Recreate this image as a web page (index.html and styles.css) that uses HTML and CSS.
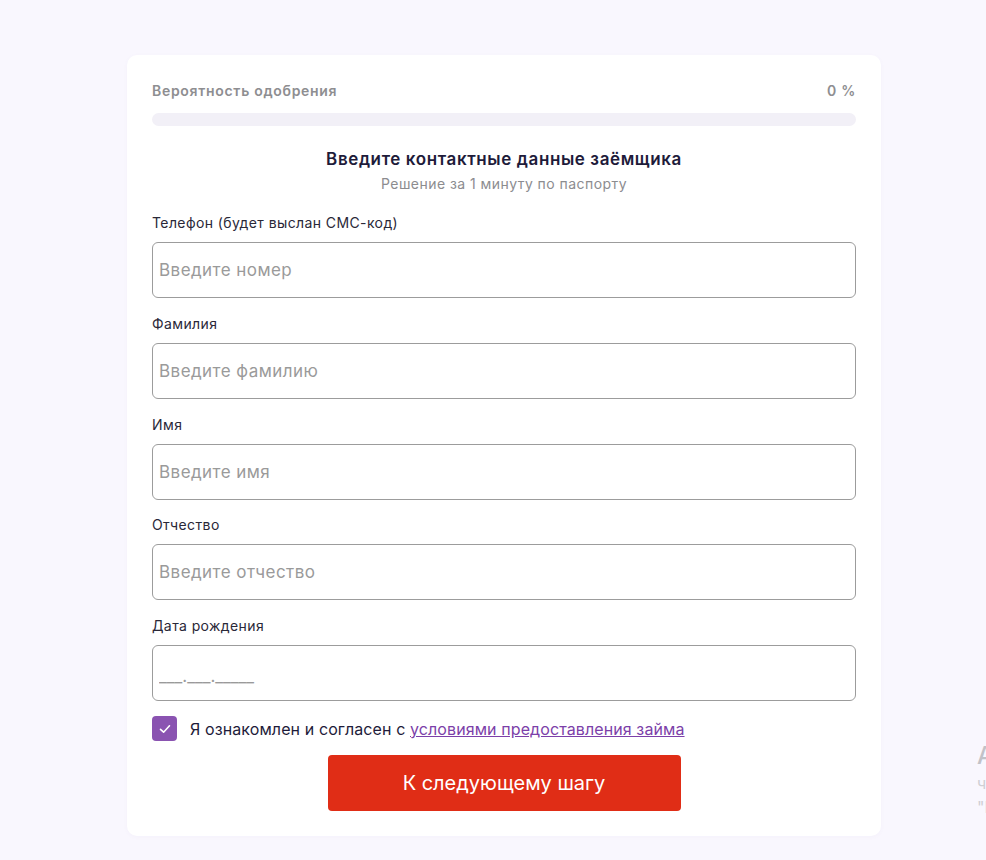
FILE: index.html
```html
<!DOCTYPE html>
<html lang="ru">
<head>
<meta charset="utf-8">
<link rel="stylesheet" href="styles.css">
</head>
<body>
<div class="page">
  <div class="card">
    <div class="progress-head">
      <span>Вероятность одобрения</span>
      <span>0 %</span>
    </div>
    <div class="progress-bar"></div>
    <h1 class="title">Введите контактные данные заёмщика</h1>
    <p class="subtitle">Решение за 1 минуту по паспорту</p>
    <div class="fields">
      <label class="field">
        <span class="label">Телефон (будет выслан СМС-код)</span>
        <input class="input" type="text" placeholder="Введите номер">
      </label>
      <label class="field">
        <span class="label">Фамилия</span>
        <input class="input" type="text" placeholder="Введите фамилию">
      </label>
      <label class="field">
        <span class="label">Имя</span>
        <input class="input" type="text" placeholder="Введите имя">
      </label>
      <label class="field">
        <span class="label">Отчество</span>
        <input class="input" type="text" placeholder="Введите отчество">
      </label>
      <label class="field">
        <span class="label">Дата рождения</span>
        <input class="input input-date" type="text" placeholder="___.___._____">
      </label>
    </div>
    <div class="agree">
      <span class="checkbox">
        <svg width="14" height="14" viewBox="0 0 14 14"><path d="M2.5 7.3 L5.6 10.2 L11.5 3.8" fill="none" stroke="#fff" stroke-width="1.6" stroke-linecap="round" stroke-linejoin="round"/></svg>
      </span>
      <span class="agree-text">Я ознакомлен и согласен с <a href="#" class="link">условиями предоставления займа</a></span>
    </div>
    <div class="actions">
      <button class="btn">К следующему шагу</button>
    </div>
  </div>
  <div class="side">
    <div class="side-title">Автоматическое решение</div>
    <div class="side-text">что нужно для получения</div>
    <div class="side-text">"Прозрачные условия"</div>
  </div>
</div>
</body>
</html>
```
FILE: styles.css
```css
html, body {
  margin: 0;
  padding: 0;
}
body {
  background: #f9f7fe;
  font-family: Inter, Roboto, "Liberation Sans", sans-serif;
  overflow: hidden;
  width: 986px;
  height: 860px;
}
.page {
  display: flex;
  align-items: flex-start;
  padding: 55px 0 0 127px;
  gap: 96px;
  width: max-content;
}
.card {
  width: 754px;
  box-sizing: border-box;
  background: #fff;
  border-radius: 10px;
  padding: 25px 25px 25px;
  box-shadow: 0 1px 4px rgba(120, 100, 170, 0.04);
  flex-shrink: 0;
}
.progress-head {
  display: flex;
  justify-content: space-between;
  font-size: 14px;
  font-weight: 600;
  letter-spacing: 0.7px;
  color: #8e8e91;
  line-height: 22px;
}
.progress-bar {
  margin-top: 11px;
  height: 13px;
  border-radius: 7px;
  background: #f2f0f7;
}
.title {
  margin: 22px 0 0;
  text-align: center;
  font-size: 17px;
  font-weight: 600;
  letter-spacing: 0.6px;
  color: #1e1b3a;
  line-height: 22px;
}
.subtitle {
  margin: 4px 0 0;
  text-align: center;
  font-size: 14px;
  letter-spacing: 0.45px;
  color: #8c8c8f;
  line-height: 20px;
}
.fields {
  margin-top: 19px;
  display: flex;
  flex-direction: column;
  gap: 15.75px;
}
.field {
  display: flex;
  flex-direction: column;
  gap: 9px;
}
.label {
  font-size: 14px;
  line-height: 20px;
  letter-spacing: 0.4px;
  color: #2a2838;
}
.input {
  height: 56px;
  box-sizing: border-box;
  border: 1px solid #9c9c9c;
  border-radius: 6px;
  padding: 0 6px;
  font-family: inherit;
  font-size: 17px;
  letter-spacing: 0.45px;
  color: #333;
  background: #fff;
  outline: none;
}
.input::placeholder {
  color: #9a9a9a;
}
.input-date {
  padding-top: 6px;
  letter-spacing: 0;
}
.agree {
  margin-top: 15px;
  display: flex;
  align-items: center;
  gap: 13px;
}
.checkbox {
  width: 25px;
  height: 25px;
  border-radius: 4px;
  background: #8a53b1;
  display: flex;
  align-items: center;
  justify-content: center;
  flex-shrink: 0;
}
.agree-text {
  font-size: 16px;
  letter-spacing: 0.1px;
  color: #1e1b3a;
  line-height: 22px;
}
.link {
  color: #7c3fa9;
  text-decoration: underline;
}
.actions {
  margin-top: 14px;
  display: flex;
  justify-content: center;
}
.btn {
  width: 353px;
  height: 56px;
  border: none;
  border-radius: 4px;
  background: #e02d16;
  color: #fff;
  font-family: inherit;
  font-size: 20px;
  cursor: pointer;
}
.side {
  margin-top: 686px;
  white-space: nowrap;
}
.side-title {
  font-size: 24px;
  font-weight: 500;
  color: #c2c2c8;
  line-height: 30px;
}
.side-text {
  font-size: 16px;
  color: #cfcfd4;
  line-height: 24px;
}
```
